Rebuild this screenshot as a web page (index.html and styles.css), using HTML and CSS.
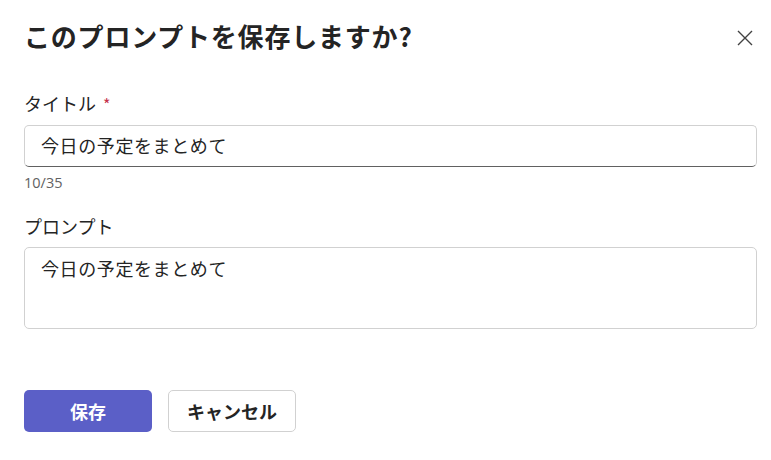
FILE: index.html
```html
<!DOCTYPE html>
<html lang="ja">
<head>
<meta charset="utf-8">
<link rel="stylesheet" href="styles.css">
</head>
<body>
<div class="dialog">
  <div class="header">
    <h1 class="title">このプロンプトを保存しますか?</h1>
    <button class="close" aria-label="閉じる">
      <svg width="20" height="20" viewBox="0 0 20 20"><path d="M3 3 L17 17 M17 3 L3 17" stroke="#424242" stroke-width="1.4" fill="none"/></svg>
    </button>
  </div>
  <div class="field field-title">
    <label class="label">タイトル<span class="req">*</span></label>
    <div class="input">今日の予定をまとめて</div>
    <div class="counter">10/35</div>
  </div>
  <div class="field field-prompt">
    <label class="label">プロンプト</label>
    <div class="textarea">今日の予定をまとめて</div>
  </div>
  <div class="actions">
    <button class="btn btn-primary">保存</button>
    <button class="btn btn-secondary">キャンセル</button>
  </div>
</div>
</body>
</html>
```
FILE: styles.css
```css
* { box-sizing: border-box; }
body {
  margin: 0;
  background: #ffffff;
  font-family: "Noto Sans CJK JP", "Noto Sans", sans-serif;
  color: #242424;
}
.dialog {
  padding: 18px 14px 0 24px;
}
.header {
  display: flex;
  justify-content: space-between;
  align-items: flex-start;
}
.title {
  margin: 0;
  font-size: 26px;
  font-weight: 700;
  line-height: 36px;
  letter-spacing: 0.8px;
}
.close {
  background: none;
  border: none;
  padding: 0;
  margin: 9px 1px 0 0;
  width: 22px;
  height: 22px;
  display: flex;
  align-items: center;
  justify-content: center;
}
.field-title { margin-top: 36px; }
.field-prompt { margin-top: 21px; }
.label {
  display: block;
  font-size: 18px;
  font-weight: 400;
  line-height: 26px;
  color: #242424;
  margin-bottom: 8px;
}
.req {
  color: #c4314b;
  margin-left: 7px;
  font-size: 16px;
}
.input {
  height: 42px;
  border: 1px solid #d1d1d1;
  border-bottom-color: #616161;
  border-radius: 5px;
  padding: 0 16px;
  font-size: 18px;
  line-height: 38px;
  letter-spacing: 0.6px;
  color: #242424;
}
.counter {
  font-family: "Open Sans", "Noto Sans", sans-serif;
  font-size: 14.5px;
  line-height: 18px;
  color: #616161;
  margin-top: 7px;
}
.textarea {
  height: 82px;
  border: 1px solid #d1d1d1;
  border-radius: 5px;
  padding: 6px 16px;
  font-size: 18px;
  line-height: 28px;
  letter-spacing: 0.6px;
  color: #242424;
}
.actions {
  display: flex;
  gap: 16px;
  margin-top: 61px;
}
.btn {
  width: 128px;
  height: 42px;
  border-radius: 5px;
  font-family: "Noto Sans CJK JP", "Noto Sans", sans-serif;
  font-size: 18px;
  font-weight: 700;
  padding: 0;
}
.btn-primary {
  background: #5b5fc7;
  color: #ffffff;
  border: none;
}
.btn-secondary {
  background: #ffffff;
  color: #242424;
  border: 1px solid #d1d1d1;
}
```
